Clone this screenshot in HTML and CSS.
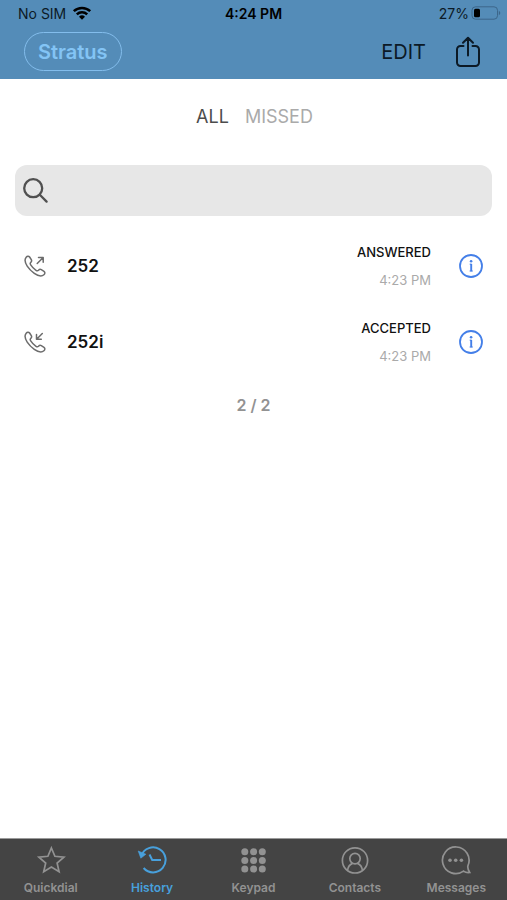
FILE: index.html
```html
<!DOCTYPE html>
<html lang="en">
<head>
<meta charset="utf-8">
<meta name="viewport" content="width=device-width, initial-scale=1">
<title>History</title>
<link rel="stylesheet" href="styles.css">
</head>
<body>
<header class="top">
  <div class="status">
    <div class="status-left">
      <span>No SIM</span>
      <svg width="20" height="14" viewBox="0 0 20 14" aria-hidden="true"><path d="M1.8 5.2a11.8 11.8 0 0 1 16.4 0M4.8 8.400a7.500 7.500 0 0 1 10.400 0" fill="none" stroke="#000" stroke-width="2.500"/><path d="M10 13.800 7 10.800a4.300 4.300 0 0 1 6 0z"/></svg>
    </div>
    <strong class="status-time">4:24 PM</strong>
    <div class="status-right">
      <span>27%</span>
      <svg width="30" height="14" viewBox="0 0 30 14" aria-hidden="true"><rect x="1" y=".8" width="25.500" height="12.400" rx="3.500" fill="none" stroke="#3c668a"/><rect x="3" y="2.800" width="6" height="8.400" rx="1.500"/><path d="M27.800 4.800c2 .8 2 3.600 0 4.400z" fill="#3c668a"/></svg>
    </div>
  </div>
  <div class="toolbar">
    <button class="account" type="button">Stratus</button>
    <div class="actions">
      <button class="edit" type="button">EDIT</button>
      <button class="icon-button" type="button" aria-label="Share">
        <svg width="26" height="32" viewBox="0 0 26 32" fill="none" stroke="#0c1a26" stroke-width="2" stroke-linecap="round" stroke-linejoin="round"><path d="M8.500 10H5.500a3.500 3.500 0 0 0-3.500 3.500v13A3.500 3.500 0 0 0 5.500 30h15a3.500 3.500 0 0 0 3.500-3.500v-13a3.500 3.500 0 0 0-3.500-3.500h-3M13 19.500V2M8 6.800l5-5 5 5"/></svg>
      </button>
    </div>
  </div>
</header>

<main class="content">
  <div class="filters">
    <button class="filter filter-on" type="button">ALL</button>
    <button class="filter" type="button">MISSED</button>
  </div>

  <label class="search">
    <svg width="26" height="26" viewBox="0 0 26 26" fill="none" stroke="#505050" stroke-width="2.300" stroke-linecap="round" aria-hidden="true"><circle cx="10.200" cy="10.200" r="9"/><path d="m16.800 16.800 6.800 6.800"/></svg>
    <input class="search-input" type="search" aria-label="Search history">
  </label>

  <ul class="calls">
    <li class="call">
      <svg class="call-icon" viewBox="0 0 22 22" fill="none" stroke="#6c6c6c" stroke-width="1.500" stroke-linecap="round" stroke-linejoin="round" aria-hidden="true"><path d="M2.200 2.200C3.200 1 4.700.8 5.600 2L7.300 4.700C8 5.900 7.600 6.700 6.700 7.500 5.900 8.300 6 8.900 6.700 9.900 8 11.900 10 14 12 15.300c1 .7 1.700.7 2.500-.1.800-.9 1.600-1.200 2.800-.6l2.700 1.700c1.200.9 1.100 2.300-.1 3.400C17.500 21.900 14 20.900 10.300 18.300 7.600 16.400 5 13.800 3.200 11.100 1 7.700.4 4.300 2.200 2.200z"/><path d="m13.200 8.500 6-6M14.500 2.500h4.700v4.700"/></svg>
      <span class="call-name">252</span>
      <span class="call-meta"><span class="call-state">ANSWERED</span><time class="call-time">4:23 PM</time></span>
      <button class="icon-button" type="button" aria-label="Details for 252">
        <svg width="24" height="24" viewBox="0 0 24 24" fill="none" stroke="#447fe8"><circle cx="12" cy="12" r="11" stroke-width="1.800"/><path d="M12.200 9.800v7.500" stroke-width="1.900"/><path d="M10.700 10.200h1.500M10.600 17h3.200" stroke-width="1"/><circle cx="12.100" cy="7.300" r="1.300" fill="#447fe8" stroke="none"/></svg>
      </button>
    </li>
    <li class="call">
      <svg class="call-icon" viewBox="0 0 22 22" fill="none" stroke="#6c6c6c" stroke-width="1.500" stroke-linecap="round" stroke-linejoin="round" aria-hidden="true"><path d="M2.200 2.200C3.200 1 4.700.8 5.600 2L7.300 4.700C8 5.900 7.600 6.700 6.700 7.500 5.900 8.300 6 8.900 6.700 9.900 8 11.900 10 14 12 15.300c1 .7 1.700.7 2.500-.1.800-.9 1.600-1.200 2.800-.6l2.700 1.700c1.200.9 1.100 2.300-.1 3.400C17.500 21.900 14 20.900 10.300 18.300 7.600 16.400 5 13.800 3.200 11.100 1 7.700.4 4.300 2.200 2.200z"/><path d="m18.300 2.500-5.700 5.700M17.300 8.300h-4.800V3.500"/></svg>
      <span class="call-name">252i</span>
      <span class="call-meta"><span class="call-state">ACCEPTED</span><time class="call-time">4:23 PM</time></span>
      <button class="icon-button" type="button" aria-label="Details for 252i">
        <svg width="24" height="24" viewBox="0 0 24 24" fill="none" stroke="#447fe8"><circle cx="12" cy="12" r="11" stroke-width="1.800"/><path d="M12.200 9.800v7.500" stroke-width="1.900"/><path d="M10.700 10.200h1.500M10.600 17h3.200" stroke-width="1"/><circle cx="12.100" cy="7.300" r="1.300" fill="#447fe8" stroke="none"/></svg>
      </button>
    </li>
  </ul>
  <p class="count">2 / 2</p>
</main>

<nav class="tabs">
  <a class="tab" href="#quickdial">
    <svg class="tab-icon" viewBox="0 0 30 30"><path d="m15.400 3 3.500 8.300 9 .8-6.800 5.900 2 8.800-7.700-4.700-7.700 4.700 2-8.800-6.800-5.900 9-.8z"/></svg>
    <span>Quickdial</span>
  </a>
  <a class="tab tab-on" href="#history" aria-current="page">
    <svg class="tab-icon" viewBox="0 0 30 30"><path d="M4.400 10.500A12.500 12.500 0 1 1 6.600 23M12.500 9.500l2.700 5.500H24" stroke-width="2"/><path d="M1.200 6 3.800 13.200 8.900 9.200z" fill="currentColor" stroke-width=".6"/></svg>
    <span>History</span>
  </a>
  <a class="tab" href="#keypad">
    <svg class="tab-icon" viewBox="0 0 30 30"><g fill="currentColor" stroke="none"><circle cx="6.800" cy="6.700" r="3.500"/><circle cx="15.600" cy="6.700" r="3.500"/><circle cx="24.300" cy="6.700" r="3.500"/><circle cx="6.800" cy="15.400" r="3.500"/><circle cx="15.600" cy="15.400" r="3.500"/><circle cx="24.300" cy="15.400" r="3.500"/><circle cx="6.800" cy="24.100" r="3.500"/><circle cx="15.600" cy="24.100" r="3.500"/><circle cx="24.300" cy="24.100" r="3.500"/></g></svg>
    <span>Keypad</span>
  </a>
  <a class="tab" href="#contacts">
    <svg class="tab-icon" viewBox="0 0 30 30"><circle cx="15" cy="15.400" r="12.600"/><circle cx="15" cy="13.600" r="5.200"/><path d="M7.500 25.400c.7-4.500 3-6.200 5-7M22.500 25.400c-.7-4.500-3-6.200-5-7"/></svg>
    <span>Contacts</span>
  </a>
  <a class="tab" href="#messages">
    <svg class="tab-icon" viewBox="0 0 30 30"><path d="M22.500 26.100A13.300 13.300 0 1 1 27 20.500c-.6 2 .2 4.700 1.700 7-2.300.4-4.500-.2-6.200-1.400z"/><g fill="currentColor" stroke="none"><circle cx="9" cy="15.200" r="1.800"/><circle cx="14.700" cy="15.200" r="1.800"/><circle cx="20.400" cy="15.200" r="1.800"/></g></svg>
    <span>Messages</span>
  </a>
</nav>
</body>
</html>
```
FILE: styles.css
```css
* {
  box-sizing: border-box;
}

body {
  margin: 0;
  min-height: 100vh;
  display: flex;
  flex-direction: column;
  background: #fff;
  color: #111;
  font-family: Inter, "Liberation Sans", sans-serif;
}

button {
  padding: 0;
  border: 0;
  background: none;
  color: inherit;
  font: inherit;
  cursor: pointer;
}

svg {
  display: block;
  flex: none;
}

.top {
  background: #548cb8;
}

.status {
  display: grid;
  grid-template-columns: 1fr auto 1fr;
  align-items: center;
  height: 26px;
  padding: 0 6px;
  font-size: 14px;
  color: #0c1a26;
}

.status-left,
.status-right {
  display: flex;
  align-items: center;
}

.status-left {
  gap: 6px;
  padding-left: 12px;
}

.status-right {
  justify-content: flex-end;
  gap: 2px;
}

.status-time {
  font-weight: 600;
  color: #000;
}

.toolbar {
  display: flex;
  align-items: center;
  justify-content: space-between;
  height: 53px;
  padding: 0 26px 2px 24px;
}

.account {
  height: 39px;
  padding: 0 13px;
  border: 1px solid #83bdec;
  border-radius: 20px;
  color: #83c4f5;
  font-size: 20px;
  font-weight: 600;
}

.actions {
  display: flex;
  align-items: center;
  gap: 29px;
}

.edit {
  font-size: 20px;
  color: #0c1a26;
}

.content {
  flex: 1;
  padding: 0 15px;
}

.filters {
  display: flex;
  justify-content: center;
  gap: 16px;
  padding: 26px 0 37px 2px;
  font-size: 18px;
  line-height: 23px;
}

.filter {
  color: #aaa;
}

.filter-on {
  color: #4c4c4c;
}

.search {
  display: flex;
  align-items: center;
  gap: 10px;
  height: 51px;
  padding: 0 8px;
  border-radius: 12px;
  background: #e7e7e7;
}

.search-input {
  flex: 1;
  min-width: 0;
  height: 100%;
  border: 0;
  outline: 0;
  background: none;
  font: inherit;
}

.calls {
  margin: 12px 0 0;
  padding: 0;
  list-style: none;
}

.call {
  display: flex;
  align-items: center;
  height: 76px;
  padding: 0 9px;
}

.call-icon {
  width: 22px;
  height: 22px;
}

.call-name {
  flex: 1;
  margin-left: 21px;
  font-size: 17px;
  font-weight: 600;
}

.call-meta {
  display: flex;
  flex-direction: column;
  align-items: flex-end;
  margin-right: 28px;
  font-size: 13px;
  line-height: 28px;
}

.call-state {
  font-weight: 500;
}

.call-time {
  color: #aaa;
}

.count {
  margin: 14px 0;
  text-align: center;
  font-size: 16px;
  line-height: 22px;
  font-weight: 600;
  color: #929292;
}

.tabs {
  display: grid;
  grid-template-columns: repeat(5, 1fr);
  height: 62px;
  border-top: 1px solid #9a9a9a;
  background: #444;
}

.tab {
  display: flex;
  flex-direction: column;
  align-items: center;
  gap: 5px;
  padding-top: 6px;
  color: #929292;
  font-size: 12px;
  font-weight: 600;
  line-height: 16px;
  text-decoration: none;
}

.tab-on {
  color: #48a0dc;
}

.tab-icon {
  width: 30px;
  height: 30px;
  fill: none;
  stroke: currentColor;
  stroke-width: 1.7;
}
```
